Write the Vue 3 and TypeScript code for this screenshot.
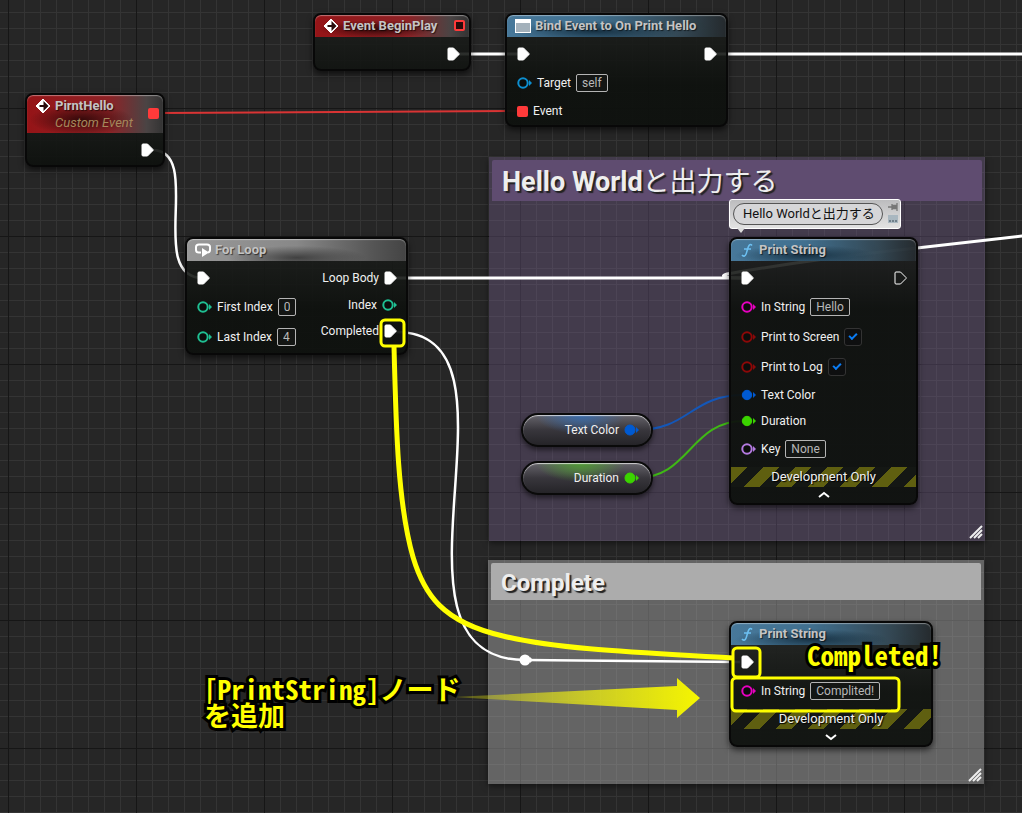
<script setup lang="ts">
type PinKind = 'exec' | 'execOpen' | 'ring' | 'dot' | 'square'

interface Pin {
  kind: PinKind
  tone?: string
  label?: string
  field?: string
  check?: boolean
}

interface GraphNode {
  id: string
  title: string
  subtitle?: string
  icon: 'event' | 'bind' | 'loop' | 'func'
  theme: 'red' | 'blue' | 'gray'
  delegate?: 'open' | 'filled'
  inputs: Pin[]
  outputs: Pin[]
  dev?: 'up' | 'down'
}

const nodes: GraphNode[] = [
  { id: 'begin', title: 'Event BeginPlay', icon: 'event', theme: 'red', delegate: 'open', inputs: [], outputs: [{ kind: 'exec' }] },
  {
    id: 'bind', title: 'Bind Event to On Print Hello', icon: 'bind', theme: 'blue',
    inputs: [{ kind: 'exec' }, { kind: 'ring', tone: 'sky', label: 'Target', field: 'self' }, { kind: 'square', label: 'Event' }],
    outputs: [{ kind: 'exec' }],
  },
  { id: 'custom', title: 'PirntHello', subtitle: 'Custom Event', icon: 'event', theme: 'red', delegate: 'filled', inputs: [], outputs: [{ kind: 'exec' }] },
  {
    id: 'loop', title: 'For Loop', icon: 'loop', theme: 'gray',
    inputs: [
      { kind: 'exec' },
      { kind: 'ring', tone: 'teal', label: 'First Index', field: '0' },
      { kind: 'ring', tone: 'teal', label: 'Last Index', field: '4' },
    ],
    outputs: [{ kind: 'exec', label: 'Loop Body' }, { kind: 'ring', tone: 'teal', label: 'Index' }, { kind: 'exec', label: 'Completed' }],
  },
  {
    id: 'print', title: 'Print String', icon: 'func', theme: 'blue', dev: 'up',
    inputs: [
      { kind: 'exec' },
      { kind: 'ring', tone: 'magenta', label: 'In String', field: 'Hello' },
      { kind: 'ring', tone: 'maroon', label: 'Print to Screen', check: true },
      { kind: 'ring', tone: 'maroon', label: 'Print to Log', check: true },
      { kind: 'dot', tone: 'azure', label: 'Text Color' },
      { kind: 'dot', tone: 'lime', label: 'Duration' },
      { kind: 'ring', tone: 'violet', label: 'Key', field: 'None' },
    ],
    outputs: [{ kind: 'execOpen' }],
  },
  {
    id: 'done', title: 'Print String', icon: 'func', theme: 'blue', dev: 'down',
    inputs: [{ kind: 'exec' }, { kind: 'ring', tone: 'magenta', label: 'In String', field: 'Complited!' }],
    outputs: [{ kind: 'execOpen' }],
  },
]

const variables = [
  { id: 'color', label: 'Text Color', tone: 'azure' },
  { id: 'duration', label: 'Duration', tone: 'lime' },
]

const sides = ['inputs', 'outputs'] as const
</script>

<template>
  <main class="graph">
    <section class="comment purple">
      <h2>Hello World<span>と出力する</span></h2>
      <svg class="grip" width="14" height="14" viewBox="0 0 14 14"><path d="M1 13 13 1M5 13 13 5M9 13 13 9" /></svg>
    </section>
    <section class="comment silver">
      <h2>Complete</h2>
      <svg class="grip" width="14" height="14" viewBox="0 0 14 14"><path d="M1 13 13 1M5 13 13 5M9 13 13 9" /></svg>
    </section>

    <svg class="layer wires">
      <path d="M455 54H520" />
      <path d="M712 54H4000" />
      <path class="event" d="M158 113 520 111" />
      <path class="curve" d="M152 150C205 150 145 278 203 278" />
      <path d="M394 278H744" />
      <path d="M1322 202 1022 236 917 248C850 255 790 263 727 274C720 276 722 278 747 278" />
      <path class="curve" d="M396 332C540 332 365 660 525 660L740 662" />
      <path class="azure" d="M636 430C690 430 690 395 744 395" />
      <path class="lime" d="M636 478C690 478 690 421 744 421" />
      <circle cx="525" cy="660" r="5.5" />
      <path class="tip" d="M530 657 533 660 530 663Z" />
    </svg>

    <article v-for="node in nodes" :key="node.id" class="node" :class="[node.id, node.theme]">
      <header>
        <svg v-if="node.icon === 'event'" class="icon" width="16" height="16" viewBox="0 0 16 16">
          <path d="M8 1 15 8 8 15 1 8Z" fill="#fff" stroke="#fff" stroke-width="1" />
          <path d="M8.500 3 13.500 8 8.500 13V9H4.500V7H8.500Z" fill="#2a0c0c" />
        </svg>
        <svg v-else-if="node.icon === 'bind'" class="icon" width="16" height="16" viewBox="0 0 16 16">
          <path d="M0 1H16V15H0Z" fill="#fff" />
          <path d="M1 5H15V14H1Z" fill="#a3b1bb" />
        </svg>
        <svg v-else-if="node.icon === 'loop'" class="icon" width="16" height="16" viewBox="0 0 16 16">
          <path d="M6 10.500H4Q1 10.500 1 8V5Q1 2.500 4 2.500H12Q15 2.500 15 5V8Q15 10 13 10.500" fill="none" stroke="#fff" stroke-width="2" />
          <path d="M7 6 14 10.500 7 15Z" fill="#fff" />
        </svg>
        <svg v-else class="icon" width="16" height="16" viewBox="0 0 16 16">
          <path d="M13 3.500Q11.500 1.500 10 3.500Q9 5 8 9Q7 13.500 5.500 14Q4 14.500 3 13M5 7H12" fill="none" stroke="#6cc0f2" stroke-width="1.500" />
        </svg>
        <div class="heading">
          <h3>{{ node.title }}</h3>
          <p v-if="node.subtitle">{{ node.subtitle }}</p>
        </div>
        <span v-if="node.delegate" class="delegate" :class="node.delegate"></span>
      </header>
      <div class="pins">
        <div v-for="side in sides" :key="side" :class="side">
          <label v-for="(pin, i) in node[side]" :key="i" class="pin" :class="{ tall: pin.field || pin.check, first: i === 0 }">
            <svg v-if="pin.kind === 'exec' || pin.kind === 'execOpen'" class="exec" :class="{ open: pin.kind === 'execOpen' }" width="13" height="14" viewBox="0 0 13 14">
              <path d="M1 2Q1 1 2 1H6.500L12 6.500V7.500L6.500 13H2Q1 13 1 12Z" />
            </svg>
            <span v-else-if="pin.kind === 'square'" class="square"></span>
            <svg v-else class="data" :class="[pin.tone, pin.kind]" width="15" height="12" viewBox="0 0 15 12">
              <circle cx="6" cy="6" r="4.700" />
              <path d="M12 3 15 6 12 9Z" />
            </svg>
            <span v-if="pin.label">{{ pin.label }}</span>
            <input v-if="pin.field" class="field" type="text" size="1" :value="pin.field" />
            <input v-if="pin.check" class="check" type="checkbox" checked />
          </label>
        </div>
      </div>
      <footer v-if="node.dev">
        <div class="tape">Development Only</div>
        <button type="button" aria-label="Toggle advanced pins">
          <svg width="12" height="8" viewBox="0 0 12 8"><path :d="node.dev === 'up' ? 'M1 6 6 2 11 6' : 'M1 2 6 6 11 2'" /></svg>
        </button>
      </footer>
    </article>

    <div v-for="v in variables" :key="v.id" class="variable" :class="v.id">
      <span>{{ v.label }}</span>
      <svg class="data dot" :class="v.tone" width="15" height="12" viewBox="0 0 15 12">
        <circle cx="6" cy="6" r="5" />
        <path d="M12 3 15 6 12 9Z" />
      </svg>
    </div>

    <div class="bubble">
      <input type="text" size="1" value="Hello Worldと出力する" aria-label="Node comment" />
      <div class="tools">
        <svg width="10" height="8" viewBox="0 0 10 8"><path d="M0 4H4M4 1V7M4 2.500H8V5.500H4ZM9 0V8" fill="#777" stroke="#777" stroke-width="1.300" /></svg>
        <svg width="10" height="8" viewBox="0 0 10 8"><path d="M0 0H10V8H0Z" fill="#a9b7c0" /><path d="M1 6H3M4 6H6M7 6H9" stroke="#6f7f8a" stroke-width="2" /></svg>
      </div>
    </div>

    <svg class="layer marks">
      <defs>
        <linearGradient id="fade" x1="0" x2="1" y1="0" y2="0">
          <stop offset="0" stop-color="#ff0" stop-opacity="0.200" />
          <stop offset="0.500" stop-color="#ee1" stop-opacity="0.700" />
          <stop offset="1" stop-color="#f6f600" />
        </linearGradient>
      </defs>
      <path class="arrow" d="M452 697 677 686V678L700 698 677 718V710Z" />
      <path d="M394 346C396 430 398 505 413 557C424 594 442 622 503 636C560 650 650 653 733 658" />
      <rect x="381" y="320" width="23" height="26" rx="4" />
      <rect x="733" y="648" width="27" height="29" rx="4" />
      <rect x="732" y="678" width="167" height="33" rx="4" />
    </svg>
    <p class="note add">[PrintString]ノード<br />を追加</p>
    <p class="note completed">Completed!</p>
  </main>
</template>

<style>
body {
  margin: 0;
  background: #262626;
}
</style>

<style scoped>
.graph {
  position: relative;
  min-height: 100vh;
  overflow: hidden;
  font: 12px/18px Roboto, "Noto Sans CJK JP", sans-serif;
  color: #f0f0f0;
  background:
    linear-gradient(90deg, #161616 1px, transparent 1px) 8px 0 / 128px 128px,
    linear-gradient(#161616 1px, transparent 1px) 0 108px / 128px 128px,
    linear-gradient(90deg, #343434 1px, transparent 1px) 8px 0 / 16px 16px,
    linear-gradient(#343434 1px, transparent 1px) 0 12px / 16px 16px,
    #262626;
}
h2, h3, p {
  margin: 0;
}
.comment {
  position: absolute;
  box-sizing: border-box;
  padding: 3px;
  box-shadow: 0 2px 6px rgba(0, 0, 0, 0.5);
}
.comment h2 {
  padding: 3px 10px 0;
  color: #eee;
  text-shadow: 2px 2px 1px #222;
  border-radius: 2px 2px 0 0;
}
.comment h2 span {
  font-weight: 400;
}
.purple {
  left: 489px;
  top: 157px;
  width: 496px;
  height: 384px;
  background: rgba(112, 93, 136, 0.4);
}
.purple h2 {
  height: 38px;
  font-size: 27px;
  line-height: 38px;
  background: #5f4c70;
}
.silver {
  left: 488px;
  top: 560px;
  width: 496px;
  height: 224px;
  background: rgba(178, 178, 178, 0.45);
}
.silver h2 {
  font-size: 24px;
  line-height: 34px;
  background: #acacac;
}
.grip {
  position: absolute;
  right: 2px;
  bottom: 2px;
  stroke: #eee;
  stroke-width: 2;
}
.layer {
  position: absolute;
  inset: 0;
  width: 100%;
  height: 100%;
  fill: none;
  pointer-events: none;
}
.wires {
  stroke: #fff;
  stroke-width: 3;
}
.wires .curve {
  stroke-width: 2.5;
}
.wires .event {
  stroke: #d93434;
  stroke-width: 2;
}
.wires .azure {
  stroke: #1457b8;
  stroke-width: 2;
}
.wires .lime {
  stroke: #3fb815;
  stroke-width: 2;
}
.wires circle, .wires .tip {
  fill: #fff;
  stroke: none;
}
.node {
  position: absolute;
  box-sizing: border-box;
  border: 2px solid #080808;
  border-radius: 8px;
  background: linear-gradient(rgba(30, 32, 30, 0.86), rgba(14, 17, 14, 0.94) 70px);
  box-shadow: 0 3px 6px rgba(0, 0, 0, 0.6);
}
.begin { left: 313px; top: 13px; width: 158px; height: 58px; }
.bind { left: 505px; top: 13px; width: 223px; }
.custom { left: 25px; top: 93px; width: 140px; height: 74px; }
.loop { left: 185px; top: 237px; width: 223px; height: 118px; }
.print { left: 729px; top: 237px; width: 189px; }
.done { left: 729px; top: 621px; width: 204px; }
header {
  display: flex;
  align-items: flex-start;
  gap: 4px;
  padding: 0 4px 0 8px;
  min-height: 22px;
  border-radius: 6px 6px 0 0;
  box-shadow: inset 0 1px 1px rgba(255, 255, 255, 0.4);
}
.red header {
  background:
    radial-gradient(ellipse at 40% 65%, rgba(30, 4, 4, 0.8), transparent 45%),
    linear-gradient(90deg, #951417, #8e2226 60%, #4a4444 88%, #333);
}
.blue header {
  background:
    radial-gradient(ellipse at 40% 75%, rgba(10, 30, 44, 0.75), transparent 45%),
    linear-gradient(90deg, #47789a, #41708f 40%, rgba(54, 76, 90, 0.88) 80%, rgba(38, 44, 48, 0.85));
}
.gray header {
  background:
    radial-gradient(ellipse at 50% 85%, rgba(40, 40, 40, 0.75), transparent 45%),
    linear-gradient(90deg, #989898, #888 50%, #555 85%, #444);
}
.icon {
  flex: none;
  margin-top: 3px;
}
.heading {
  flex: 1;
  padding-top: 1px;
  white-space: nowrap;
}
h3 {
  font-size: 13px;
  line-height: 20px;
  color: #c4c4c4;
  text-shadow: 1px 1px 1px rgba(0, 0, 0, 0.6);
}
.heading p {
  font-size: 13px;
  font-style: italic;
  line-height: 14px;
  color: #a5885c;
}
.custom header {
  min-height: 38px;
}
.delegate {
  box-sizing: border-box;
  width: 11px;
  height: 11px;
  margin-top: 5px;
  border: 2px solid #ff3a3a;
  border-radius: 2px;
  background: #2a0c0c;
}
.delegate.filled {
  margin-top: 13px;
  background: #ff3a3a;
}
.pins {
  display: flex;
  justify-content: space-between;
  padding: 3px 9px 1px 10px;
}
.pin {
  display: flex;
  align-items: center;
  gap: 5px;
  height: 26px;
  white-space: nowrap;
}
.pin.first {
  height: 28px;
}
.pin.tall {
  height: 30px;
}
.outputs .pin {
  flex-direction: row-reverse;
}
.exec {
  fill: #fff;
  stroke: #fff;
}
.exec.open {
  fill: none;
}
.square {
  width: 11px;
  height: 11px;
  border-radius: 2px;
  background: #ff3a3a;
}
.data {
  flex: none;
  fill: currentColor;
}
.data circle {
  stroke: currentColor;
  stroke-width: 2;
}
.ring circle {
  fill: #0b0d0b;
}
.dot circle {
  stroke-width: 1;
}
.sky { color: #0d8fd0; }
.teal { color: #1fbf92; }
.magenta { color: #e800c0; }
.maroon { color: #8c0808; }
.azure { color: #005ad2; }
.lime { color: #3bd400; }
.violet { color: #b47ae0; }
.field {
  field-sizing: content;
  box-sizing: border-box;
  height: 18px;
  padding: 0 5px;
  border: 1px solid #b4b4b4;
  border-radius: 2px;
  background: #141614;
  color: #b8b8b8;
  font: inherit;
  line-height: 16px;
}
.check {
  appearance: none;
  display: grid;
  place-items: center;
  box-sizing: border-box;
  width: 18px;
  height: 18px;
  margin: 0;
  border: 1px solid #333;
  border-radius: 3px;
  background: #0e0f10;
}
.check::before {
  content: "";
  width: 6px;
  height: 3px;
  margin-bottom: 3px;
  border: solid #0a7cf4;
  border-width: 0 0 2px 2px;
  transform: rotate(-45deg);
}
.tape {
  margin-top: 2px;
  font-size: 13px;
  line-height: 20px;
  text-align: center;
  text-shadow: 1px 1px 1px #000;
  background: linear-gradient(135deg, #5f5f10 25%, #141714 25% 50%, #5f5f10 50% 75%, #141714 75%) 0 0 / 32px 32px;
}
footer button {
  display: flex;
  justify-content: center;
  align-items: center;
  width: 100%;
  height: 16px;
  padding: 0;
  border: 0;
  background: none;
}
footer svg {
  fill: none;
  stroke: #fff;
  stroke-width: 2;
}
.variable {
  position: absolute;
  left: 521px;
  box-sizing: border-box;
  display: flex;
  justify-content: flex-end;
  align-items: center;
  gap: 5px;
  width: 132px;
  height: 34px;
  padding-right: 12px;
  border: 2px solid #0a0a0a;
  border-radius: 17px;
  box-shadow: inset 0 1px 1px rgba(255, 255, 255, 0.7), 0 3px 5px rgba(0, 0, 0, 0.5);
}
.variable.color {
  top: 413px;
  background: radial-gradient(ellipse at 45% 0, #386aa8, transparent 45%), linear-gradient(#65636a, #38363c 50%, #252428);
}
.variable.duration {
  top: 461px;
  background: radial-gradient(ellipse at 45% 0, #4f9a33, transparent 45%), linear-gradient(#65636a, #38363c 50%, #252428);
}
.bubble {
  position: absolute;
  left: 729px;
  top: 199px;
  display: flex;
  gap: 5px;
  padding: 3px 2px 3px 3px;
  border: 1px solid #fff;
  border-radius: 3px;
  background: linear-gradient(#bcbcbe, #e2e2e2);
}
.bubble::after {
  content: "";
  position: absolute;
  left: 7px;
  top: 100%;
  border: solid transparent;
  border-width: 5px 4px 0;
  border-top-color: #ddd;
}
.bubble input {
  field-sizing: content;
  box-sizing: border-box;
  height: 22px;
  padding: 0 7px 4px 9px;
  border: 1px solid #555;
  border-radius: 11px;
  background: #d6d6d8;
  color: #111;
  font: inherit;
  font-size: 13px;
}
.tools {
  display: flex;
  flex-direction: column;
  gap: 4px;
}
.marks {
  stroke: #ff0;
  stroke-width: 5;
}
.marks rect {
  stroke-width: 3;
}
.marks .arrow {
  fill: url(#fade);
  stroke: none;
}
.note {
  position: absolute;
  white-space: nowrap;
  font: bold 27px/26px "Noto Sans CJK JP", sans-serif;
  font-feature-settings: "hwid";
  color: #ff0;
  -webkit-text-stroke: 6px #000;
  paint-order: stroke fill;
}
.add {
  left: 204px;
  top: 676px;
}
.completed {
  left: 807px;
  top: 642px;
}
</style>
